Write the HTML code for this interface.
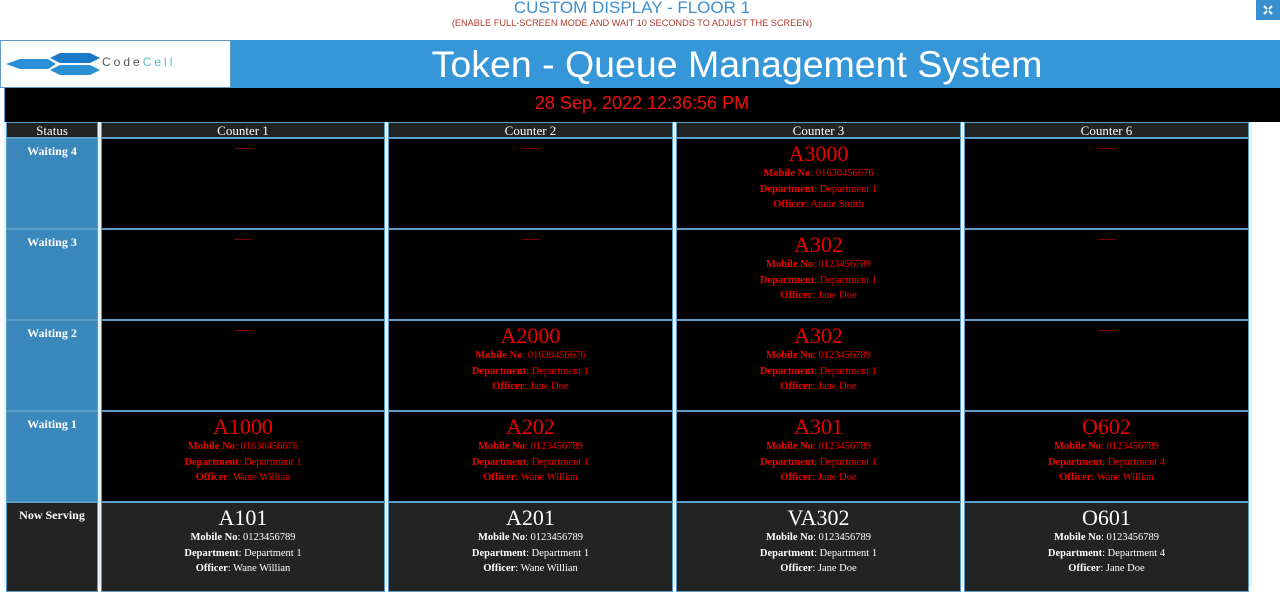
<!DOCTYPE html>
<html><head><meta charset="utf-8"><style>
*{margin:0;padding:0;box-sizing:border-box}
body{width:1280px;height:587px;overflow:hidden;background:#fff;position:relative;font-family:"Liberation Serif",serif}
.a{position:absolute}
.sans{font-family:"Liberation Sans",sans-serif}
.c{position:absolute;border:1px solid #5b9cc8;text-align:center;color:#e00;background:#000}
.st{background:#3a88bb;color:#fff;font-weight:bold;font-size:12px;padding-top:5px}
.h{background:#232323;color:#fff;font-size:13px;line-height:15px}
.ns{background:#232323;color:#fff}
.t{font-size:22px;line-height:24px;margin-top:3px}
.d{font-size:10.5px;line-height:15.5px}
.d b{font-weight:bold}
.dash{font-size:10px;line-height:12px;margin-top:4px;color:#c00}
</style></head><body>
<div class="a sans" style="left:0;width:1264px;top:-2px;text-align:center;color:#3d8fd0;font-size:17px">CUSTOM DISPLAY - FLOOR 1</div>
<div class="a sans" style="left:0;width:1264px;top:18px;text-align:center;color:#b03a2e;font-size:9.2px">(ENABLE FULL-SCREEN MODE AND WAIT 10 SECONDS TO ADJUST THE SCREEN)</div>
<div class="a" style="left:1256px;top:0;width:24px;height:20px;background:#3a8fd0"></div>
<svg class="a" style="left:1263px;top:5px" width="10" height="10" stroke="#fff" stroke-width="2"><path d="M1 1L4 4M9 1L6 4M1 9L4 6M9 9L6 6"/></svg>
<div class="a" style="left:0;top:40px;width:1280px;height:48px;background:#3596d8"></div>
<div class="a" style="left:0;top:40px;width:231px;height:48px;background:#fff;border:1px solid #5b9cc8"></div>
<svg class="a" style="left:4px;top:52px" width="100" height="24"><polygon points="2,12 16,7 44,7 52,12 44,17 16,17" fill="#2b8fd6"/><polygon points="46,6 56,1 86,1 96,6 86,11 56,11" fill="#1a7ac8"/><polygon points="46,18 56,13 86,13 96,18 86,23 56,23" fill="#2b8fd6"/></svg>
<div class="a sans" style="left:102px;top:55px;font-size:12px;letter-spacing:3px;color:#555">Code<span style="color:#5bc">Cell</span></div>
<div class="a sans" style="left:196px;width:1082px;top:40px;text-align:center;color:#fff;font-size:37.5px;line-height:48px">Token - Queue Management System</div>
<div class="a" style="left:4px;top:88px;width:1276px;height:34px;background:#000;border-left:1px solid #5b9cc8"></div>
<div class="a sans" style="left:4px;width:1276px;top:93px;text-align:center;color:#e11;font-size:18px">28 Sep, 2022 12:36:56 PM</div>
<div class="a" style="left:4px;top:122px;width:1248px;height:465px;background:#e6f1f8"></div>

<div class="c h" style="left:6px;top:122px;width:92px;height:16px">Status</div>
<div class="c h" style="left:101px;top:122px;width:284px;height:16px">Counter 1</div>
<div class="c h" style="left:388px;top:122px;width:285px;height:16px">Counter 2</div>
<div class="c h" style="left:676px;top:122px;width:285px;height:16px">Counter 3</div>
<div class="c h" style="left:964px;top:122px;width:285px;height:16px">Counter 6</div>

<div class="c st" style="left:6px;top:138px;width:92px;height:91px">Waiting 4</div>
<div class="c" style="left:101px;top:138px;width:284px;height:91px"><div class="dash">-----</div></div>
<div class="c" style="left:388px;top:138px;width:285px;height:91px"><div class="dash">-----</div></div>
<div class="c" style="left:676px;top:138px;width:285px;height:91px"><div class="t">A3000</div><div class="d"><b>Mobile No</b>: 01630456676<br><b>Department</b>: Department 1<br><b>Officer</b>: Annie Smith</div></div>
<div class="c" style="left:964px;top:138px;width:285px;height:91px"><div class="dash">-----</div></div>

<div class="c st" style="left:6px;top:229px;width:92px;height:91px">Waiting 3</div>
<div class="c" style="left:101px;top:229px;width:284px;height:91px"><div class="dash">-----</div></div>
<div class="c" style="left:388px;top:229px;width:285px;height:91px"><div class="dash">-----</div></div>
<div class="c" style="left:676px;top:229px;width:285px;height:91px"><div class="t">A302</div><div class="d"><b>Mobile No</b>: 0123456789<br><b>Department</b>: Department 1<br><b>Officer</b>: Jane Doe</div></div>
<div class="c" style="left:964px;top:229px;width:285px;height:91px"><div class="dash">-----</div></div>

<div class="c st" style="left:6px;top:320px;width:92px;height:91px">Waiting 2</div>
<div class="c" style="left:101px;top:320px;width:284px;height:91px"><div class="dash">-----</div></div>
<div class="c" style="left:388px;top:320px;width:285px;height:91px"><div class="t">A2000</div><div class="d"><b>Mobile No</b>: 01630456676<br><b>Department</b>: Department 1<br><b>Officer</b>: Jane Doe</div></div>
<div class="c" style="left:676px;top:320px;width:285px;height:91px"><div class="t">A302</div><div class="d"><b>Mobile No</b>: 0123456789<br><b>Department</b>: Department 1<br><b>Officer</b>: Jane Doe</div></div>
<div class="c" style="left:964px;top:320px;width:285px;height:91px"><div class="dash">-----</div></div>

<div class="c st" style="left:6px;top:411px;width:92px;height:91px">Waiting 1</div>
<div class="c" style="left:101px;top:411px;width:284px;height:91px"><div class="t">A1000</div><div class="d"><b>Mobile No</b>: 01630456676<br><b>Department</b>: Department 1<br><b>Officer</b>: Wane Willian</div></div>
<div class="c" style="left:388px;top:411px;width:285px;height:91px"><div class="t">A202</div><div class="d"><b>Mobile No</b>: 0123456789<br><b>Department</b>: Department 1<br><b>Officer</b>: Wane Willian</div></div>
<div class="c" style="left:676px;top:411px;width:285px;height:91px"><div class="t">A301</div><div class="d"><b>Mobile No</b>: 0123456789<br><b>Department</b>: Department 1<br><b>Officer</b>: Jane Doe</div></div>
<div class="c" style="left:964px;top:411px;width:285px;height:91px"><div class="t">O602</div><div class="d"><b>Mobile No</b>: 0123456789<br><b>Department</b>: Department 4<br><b>Officer</b>: Wane Willian</div></div>

<div class="c st" style="left:6px;top:502px;width:92px;height:90px;background:#232323">Now Serving</div>
<div class="c ns" style="left:101px;top:502px;width:284px;height:90px"><div class="t">A101</div><div class="d"><b>Mobile No</b>: 0123456789<br><b>Department</b>: Department 1<br><b>Officer</b>: Wane Willian</div></div>
<div class="c ns" style="left:388px;top:502px;width:285px;height:90px"><div class="t">A201</div><div class="d"><b>Mobile No</b>: 0123456789<br><b>Department</b>: Department 1<br><b>Officer</b>: Wane Willian</div></div>
<div class="c ns" style="left:676px;top:502px;width:285px;height:90px"><div class="t">VA302</div><div class="d"><b>Mobile No</b>: 0123456789<br><b>Department</b>: Department 1<br><b>Officer</b>: Jane Doe</div></div>
<div class="c ns" style="left:964px;top:502px;width:285px;height:90px"><div class="t">O601</div><div class="d"><b>Mobile No</b>: 0123456789<br><b>Department</b>: Department 4<br><b>Officer</b>: Jane Doe</div></div>
</body></html>
